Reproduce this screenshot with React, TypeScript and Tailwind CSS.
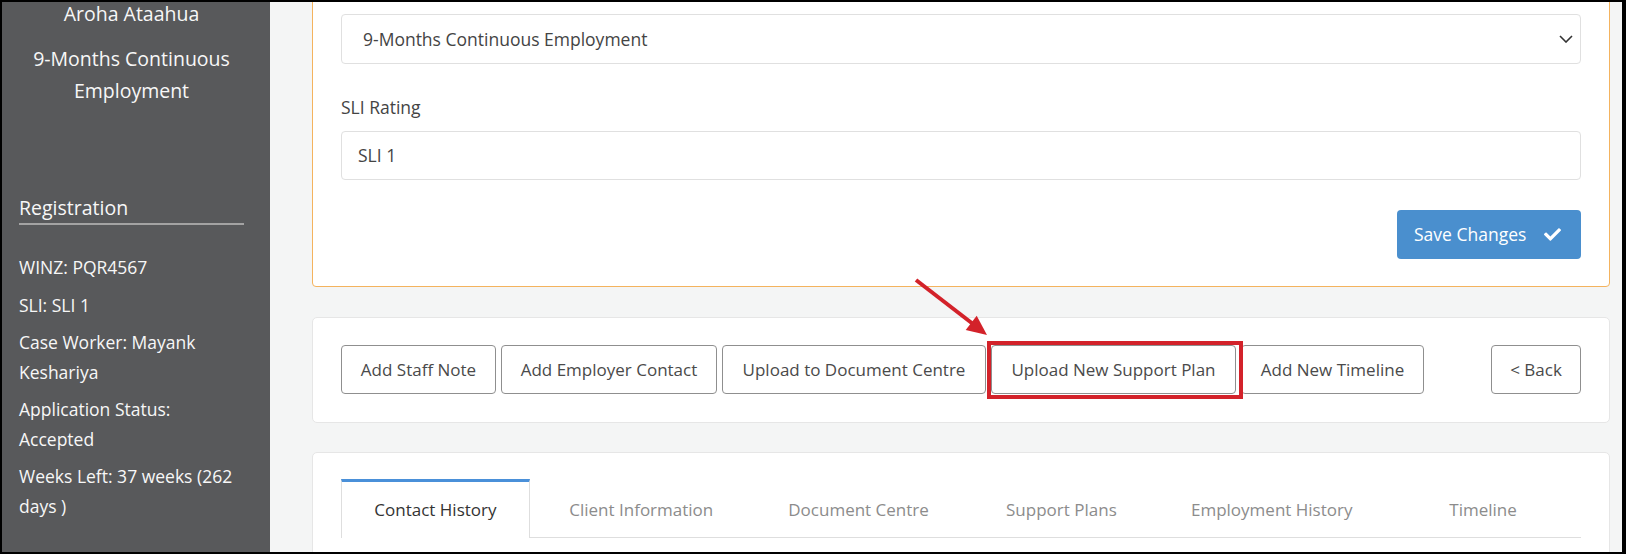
import { FaCheck } from 'react-icons/fa';

const actions = [
  { label: 'Add Staff Note', width: 'w-[155px]' },
  { label: 'Add Employer Contact', width: 'w-[216px]' },
  { label: 'Upload to Document Centre', width: 'w-[264px]' },
  { label: 'Upload New Support Plan', width: 'w-[245px]' },
  { label: 'Add New Timeline', width: 'w-[183px]' },
];

const tabs = [
  { label: 'Contact History', width: 'w-[189px]', active: true },
  { label: 'Client Information', width: 'w-[223px]' },
  { label: 'Document Centre', width: 'w-[212px]' },
  { label: 'Support Plans', width: 'w-[194px]' },
  { label: 'Employment History', width: 'w-[227px]' },
  { label: 'Timeline', width: 'w-[196px]' },
];

const Sidebar = () => {
  return (
    <aside className="flex w-[268px] shrink-0 flex-col bg-[#58595b] pl-[17px] pr-[26px] text-[#f7f7f7]">
      <div className="-mt-1 text-center text-[19.5px] leading-[32px]">Aroha Ataahua</div>
      <div className="mt-[13px] text-center text-[19.5px] leading-[32px]">
        9-Months Continuous
        <br />
        Employment
      </div>
      <h2 className="mt-[86px] border-b-2 border-[#a3a3a3] text-[19.5px] leading-[30px]">Registration</h2>
      <div className="mt-[28px] flex flex-col gap-[8px] text-[17.5px] leading-[29.5px]">
        <p>WINZ: PQR4567</p>
        <p>SLI: SLI 1</p>
        <p className="whitespace-nowrap">
          Case Worker: Mayank
          <br />
          Keshariya
        </p>
        <p className="whitespace-nowrap">
          Application Status:
          <br />
          Accepted
        </p>
        <p className="whitespace-nowrap">
          Weeks Left: 37 weeks (262
          <br />
          days )
        </p>
      </div>
    </aside>
  );
};

const App = () => {
  return (
    <div
      className="relative flex h-[554px] w-[1626px] overflow-hidden border-b-2 border-l-2 border-r-4 border-t-2 border-black bg-[#f4f5f5] text-[#444]"
      style={{ fontFamily: '"Open Sans", "Noto Sans", sans-serif' }}>
      <Sidebar />

      <main className="flex min-w-0 flex-1 flex-col pl-[42px] pr-[12px]">
        {/* client details form */}
        <section className="-mt-[20px] flex flex-col rounded-[4px] border border-[#f4b35e] bg-white px-[28px] pb-[27px] pt-[31px]">
          <div className="flex h-[50px] items-center justify-between rounded-[4px] border border-[#e0e0e0] pl-[21px] pr-[7px] text-[17.5px]">
            <span>9-Months Continuous Employment</span>
            <svg width="14" height="8" viewBox="0 0 14 8" fill="none">
              <polyline points="1,1 7,7 13,1" stroke="#333" strokeWidth="1.6" />
            </svg>
          </div>
          <label className="mt-[31px] text-[17.5px] leading-[24px]">SLI Rating</label>
          <div className="mt-[12px] flex h-[49px] items-center rounded-[4px] border border-[#e0e0e0] pl-[16px] text-[17.5px]">
            SLI 1
          </div>
          <button className="mt-[30px] flex h-[49px] w-[184px] items-center gap-[18px] self-end rounded-[4px] bg-[#4a8fce] pl-[17px] text-[17.5px] text-white">
            Save Changes
            <FaCheck size={17} />
          </button>
        </section>

        {/* actions */}
        <section className="mt-[30px] flex gap-[5px] rounded-[5px] border border-[#e6e6e6] bg-white px-[28px] pb-[28px] pt-[27px]">
          {actions.map((a) => (
            <button
              key={a.label}
              className={`${a.width} flex h-[49px] items-center justify-center whitespace-nowrap rounded-[4px] border border-[#8f8f8f] bg-white text-[17px] text-[#4a4a4a]`}>
              {a.label}
            </button>
          ))}
          <button className="ml-auto flex h-[49px] w-[90px] items-center justify-center rounded-[4px] border border-[#8f8f8f] bg-white text-[17px] text-[#4a4a4a]">
            &lt; Back
          </button>
        </section>

        {/* tabs */}
        <section className="mt-[29px] h-[200px] shrink-0 rounded-[5px] border border-[#e6e6e6] bg-white px-[28px] pt-[26px]">
          <div className="flex border-b border-[#dedede]">
            {tabs.map((t) => (
              <div
                key={t.label}
                className={
                  t.active
                    ? `${t.width} -mb-px flex h-[59px] items-center justify-center border-x border-t-[3px] border-[#dedede] border-t-[#4a90d9] bg-white text-[17px] text-[#333]`
                    : `${t.width} flex h-[58px] items-center justify-center pt-[3px] text-[17px] text-[#8c8c8c]`
                }>
                {t.label}
              </div>
            ))}
          </div>
        </section>
      </main>

      {/* annotation: highlight box and arrow */}
      <div className="pointer-events-none absolute left-[985px] top-[339px] h-[58px] w-[256px] border-4 border-[#d3222a]" />
      <svg className="pointer-events-none absolute left-[898px] top-[268px]" width="100" height="75" viewBox="0 0 100 75">
        <line x1="16" y1="10" x2="73" y2="54" stroke="#d3222a" strokeWidth="4" />
        <polygon points="87,65 65.7,59.9 76.7,45.7" fill="#d3222a" />
      </svg>
    </div>
  );
};

export default App;
